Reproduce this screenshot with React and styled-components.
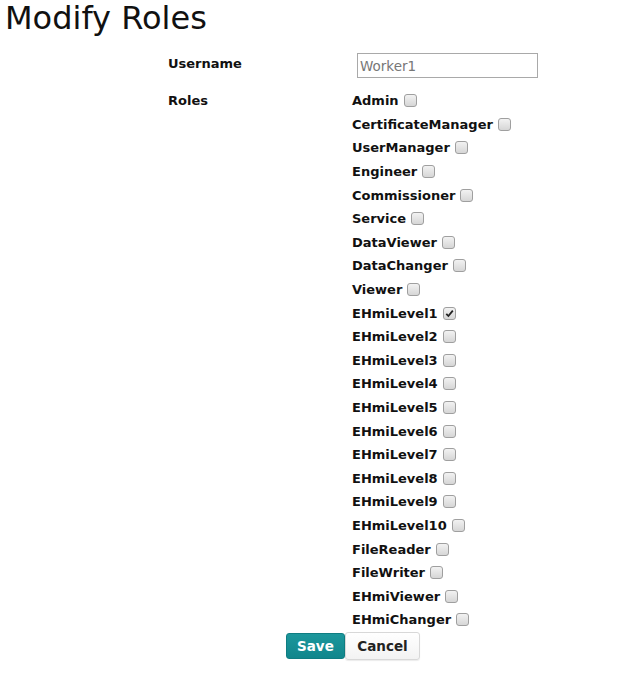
import React from "react";
import styled, { createGlobalStyle } from "styled-components";

const GlobalStyle = createGlobalStyle`
    body {
        margin: 0;
        background: #fff;
        font-family: "DejaVu Sans", Verdana, sans-serif;
        color: #111;
    }
`

const Page = styled.div`
    width: 636px;
    height: 679px;
    overflow: hidden;
`

const Title = styled.h1`
    margin: 0;
    padding: 0 0 0 5px;
    font-size: 32px;
    font-weight: normal;
    line-height: 37px;
    color: #111;
`

const Form = styled.div`
    display: grid;
    grid-template-columns: 184px auto;
    margin: 15px 0 0 168px;
`

const Label = styled.div`
    font-size: 13px;
    font-weight: bold;
    line-height: 23.6px;
`

const Field = styled.div`
    padding-top: 1px;
`

const TextInput = styled.input`
    box-sizing: border-box;
    width: 181px;
    height: 25px;
    margin: 0 0 11px 5px;
    padding: 0 2px;
    border: 1px solid #a9a9a9;
    font-family: "DejaVu Sans", Verdana, sans-serif;
    font-size: 13.5px;
    color: #777;
    outline: none;
`

const RoleList = styled.div`
    display: flex;
    flex-direction: column;
`

const Role = styled.label`
    display: flex;
    align-items: center;
    height: 23.6px;
    font-size: 13px;
    font-weight: bold;
    white-space: nowrap;
`

const Box = styled.span`
    display: inline-flex;
    align-items: center;
    justify-content: center;
    box-sizing: border-box;
    width: 13px;
    height: 13px;
    margin-left: 5px;
    border: 1px solid #9f9f9f;
    border-radius: 3px;
    background: linear-gradient(#f2f2f2, #d6d6d6);
`

const Actions = styled.div`
    display: flex;
    margin: 0 0 0 286px;
`

const Button = styled.button`
    box-sizing: border-box;
    height: ${p => (p.$primary ? 26 : 28)}px;
    margin-top: ${p => (p.$primary ? 1 : 0)}px;
    padding: 0 ${p => (p.$primary ? 10 : 11.5)}px;
    font-family: "DejaVu Sans", Verdana, sans-serif;
    font-size: 13.5px;
    font-weight: bold;
    border-radius: 3px;
    cursor: pointer;
    color: ${p => (p.$primary ? "#fff" : "#222")};
    background: ${p => (p.$primary ? "linear-gradient(#1c979c, #11868c)" : "linear-gradient(#ffffff, #f3f3f3)")};
    border: 1px solid ${p => (p.$primary ? "#0f7d82" : "#d8d8d8")};
    box-shadow: ${p => (p.$primary ? "none" : "0 1px 1px rgba(0,0,0,0.08)")};
`

const roles = [
    "Admin", "CertificateManager", "UserManager", "Engineer", "Commissioner",
    "Service", "DataViewer", "DataChanger", "Viewer",
    "EHmiLevel1", "EHmiLevel2", "EHmiLevel3", "EHmiLevel4", "EHmiLevel5",
    "EHmiLevel6", "EHmiLevel7", "EHmiLevel8", "EHmiLevel9", "EHmiLevel10",
    "FileReader", "FileWriter", "EHmiViewer", "EHmiChanger",
];

function CheckBox({ checked }) {
    return (
        <Box>
            {checked && (
                <svg width="9" height="9" viewBox="0 0 9 9">
                    <path d="M1.3 4.8 L3.4 7 L7.8 1.6" fill="none" stroke="#222" strokeWidth="1.8" />
                </svg>
            )}
        </Box>
    );
}

export default function App() {
    return (
        <Page>
            <GlobalStyle />
            <Title>Modify Roles</Title>
            <Form>
                <Label>Username</Label>
                <Field>
                    <TextInput defaultValue="Worker1" />
                </Field>
                <Label>Roles</Label>
                <RoleList>
                    {roles.map(role => (
                        <Role key={role}>
                            {role}
                            <CheckBox checked={role === "EHmiLevel1"} />
                        </Role>
                    ))}
                </RoleList>
            </Form>
            <Actions>
                <Button $primary>Save</Button>
                <Button>Cancel</Button>
            </Actions>
        </Page>
    );
}
